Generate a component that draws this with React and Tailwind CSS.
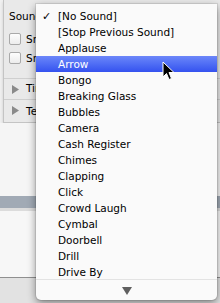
import React from "react";

const items = [
  "[No Sound]",
  "[Stop Previous Sound]",
  "Applause",
  "Arrow",
  "Bongo",
  "Breaking Glass",
  "Bubbles",
  "Camera",
  "Cash Register",
  "Chimes",
  "Clapping",
  "Click",
  "Crowd Laugh",
  "Cymbal",
  "Doorbell",
  "Drill",
  "Drive By",
];

function Tri() {
  return (
    <svg width="7" height="9" viewBox="0 0 7 9" className="shrink-0">
      <path d="M0 0 L7 4.5 L0 9 Z" fill="#8a8a8a" />
    </svg>
  );
}

function Box() {
  return (
    <div className="w-[12px] h-[12px] rounded-[2px] border border-[#a9a9a9] bg-gradient-to-b from-[#fdfdfd] to-[#ececec] shrink-0" />
  );
}

export default function App() {
  return (
    <div
      className="relative w-[220px] h-[303px] overflow-hidden bg-[#f4f4f4] text-[10.5px] text-black"
      style={{ fontFamily: '"DejaVu Sans", "Liberation Sans", sans-serif' }}
    >
      {/* background page */}
      <div className="flex flex-col h-full">
        <div className="h-[123px] pl-[3px] bg-[#f0f0f0]">
          <div className="h-full border-l border-b border-[#c4c4c4] bg-[#e9e9e9] shadow-[0_2px_3px_rgba(0,0,0,0.15)] flex flex-col">
            <div className="h-[25px] pl-[5px] pt-[10px] leading-[13px]">Sound</div>
            <div className="h-[20px] pl-[5px] pt-[8px] flex items-start gap-[5px] leading-[13px]">
              <Box />
              <span>Sn</span>
            </div>
            <div className="h-[33px] pl-[5px] pt-[7px] flex items-start gap-[5px] leading-[13px]">
              <Box />
              <span>Sn</span>
            </div>
            <div className="h-[21px] border-t border-[#cfcfcf] pl-[8px] flex items-center gap-[7px]">
              <Tri />
              <span>Tim</span>
            </div>
            <div className="flex-1 border-t border-[#cfcfcf] pl-[8px] pt-[6px] flex items-start gap-[7px]">
              <Tri />
              <span className="leading-[10px]">Tex</span>
            </div>
          </div>
        </div>
        <div className="h-[73px] bg-[#f5f5f5]" />
        <div className="h-[12px] bg-[#a1aab5]" />
        <div className="h-[3px] bg-[#dcdcdc]" />
        <div className="h-[67px] bg-[#f7f7f7] border-b border-[#8f8f8f]" />
        <div className="flex-1 bg-[#e2e2e2]" />
      </div>

      {/* popup menu */}
      <div className="absolute left-[36px] top-[4px] w-[181px] h-[296px] bg-[#fafafa] rounded-b-[5px] shadow-[0_3px_8px_rgba(0,0,0,0.45),0_0_0_1px_rgba(0,0,0,0.08)] flex flex-col pt-[4px]">
        {items.map((it, i) => {
          const sel = i === 3;
          return (
            <div
              key={it}
              className={
                "h-[16px] flex items-center pl-[6px] " +
                (sel ? "bg-gradient-to-b from-[#6c86f9] to-[#3551ef] text-white" : "")
              }
            >
              <span className="w-[16px] text-[11px] leading-none">{i === 0 ? "✓" : ""}</span>
              <span className="leading-none">{it}</span>
            </div>
          );
        })}
        <div className="mt-[-1px] flex-1 border-t border-[#e3e3e3] flex items-center justify-center">
          <svg width="10" height="8" viewBox="0 0 10 8" className="mt-[1px]">
            <path d="M0 0 L10 0 L5 8 Z" fill="#5f5f5f" />
          </svg>
        </div>
      </div>

      {/* cursor */}
      <svg
        className="absolute left-[162px] top-[61px]"
        width="13"
        height="20"
        viewBox="0 0 13 20"
      >
        <path
          d="M1 1 L1 16 L4.5 12.5 L7 18.5 L9.5 17.5 L7 11.5 L12 11.5 Z"
          fill="#000"
          stroke="#fff"
          strokeWidth="1"
          strokeLinejoin="round"
        />
      </svg>
    </div>
  );
}
